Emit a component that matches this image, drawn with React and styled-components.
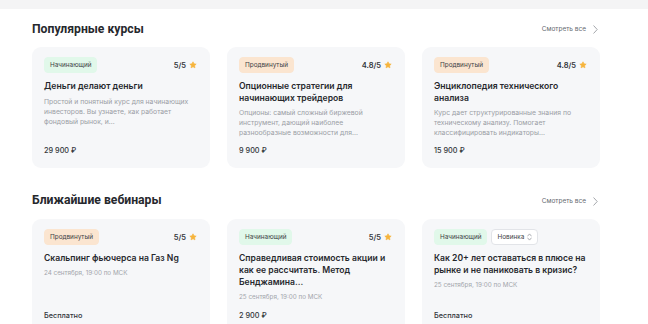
import React from "react";
import styled, { createGlobalStyle } from "styled-components";

const GlobalStyle = createGlobalStyle`
  html, body { margin: 0; padding: 0; background: #ffffff; }
  body { font-family: Inter, "Noto Sans", sans-serif; color: #2b2d33; }
  * { box-sizing: border-box; }
`;

const TopBar = styled.div`
  height: 9px;
  background: #f4f4f5;
`;

const Main = styled.main`
  padding: 12px 48px 0 32px;
  display: flex;
  flex-direction: column;
  gap: 24px;
`;

const Section = styled.section`
  display: flex;
  flex-direction: column;
  gap: ${(p) => p.$gap || 10}px;
`;

const SectionHeader = styled.div`
  display: flex;
  align-items: center;
  justify-content: space-between;
  height: 16px;
`;

const SectionTitle = styled.h2`
  margin: 0;
  font-family: Roboto, "Liberation Sans", sans-serif;
  font-weight: 700;
  font-size: 12.2px;
  line-height: 16px;
  color: #26282d;
`;

const SeeAll = styled.a`
  display: flex;
  align-items: center;
  gap: 7px;
  font-family: Inter, sans-serif;
  font-size: 6.5px;
  color: #666a70;
  text-decoration: none;
  margin-right: 2px;
  margin-top: ${(p) => p.$shift || 0}px;
`;

const Grid = styled.div`
  display: grid;
  grid-template-columns: repeat(3, 1fr);
  gap: 17px;
`;

const Card = styled.article`
  background: #f6f7f9;
  border-radius: 9px;
  padding: 10px 12px 12px;
  display: flex;
  flex-direction: column;
  min-height: ${(p) => p.$minH || 0}px;
`;

const CardTop = styled.div`
  display: flex;
  align-items: center;
  justify-content: space-between;
  height: 16px;
`;

const Badges = styled.div`
  display: flex;
  gap: 4px;
`;

const badgeColors = {
  green: { bg: "#e1f8ea", border: "#e1f8ea" },
  orange: { bg: "#fbe5d0", border: "#fbe5d0" },
  outline: { bg: "#ffffff", border: "#e2e4e8" },
};

const Badge = styled.span`
  display: inline-flex;
  align-items: center;
  gap: 3px;
  height: 16px;
  padding: 0 5px;
  border-radius: 4px;
  font-size: 6.4px;
  color: #3c3f45;
  background: ${(p) => badgeColors[p.$tone].bg};
  border: 0.7px solid ${(p) => badgeColors[p.$tone].border};
`;

const Rating = styled.div`
  display: flex;
  align-items: center;
  gap: 3px;
  font-size: 7.5px;
  font-weight: 600;
  color: #33363b;
  margin-right: 1px;
`;

const CardTitle = styled.h3`
  margin: 8px 0 0;
  font-size: 8.6px;
  font-weight: 600;
  line-height: 11.7px;
  color: #26282d;
`;

const Desc = styled.p`
  margin: 4px 0 0;
  font-size: 6.8px;
  line-height: 10px;
  color: #9b9ea5;
`;

const DateText = styled.p`
  margin: 3px 0 0;
  font-size: 6.3px;
  line-height: 10px;
  color: #a2a5ab;
`;

const Price = styled.div`
  margin-top: auto;
  padding-top: 8px;
  font-size: 7.3px;
  font-weight: 500;
  line-height: 10px;
  color: #33363b;
`;

const StarIcon = () => (
  <svg width="8" height="8" viewBox="0 0 24 24" aria-hidden="true">
    <path
      d="M12 2.5l2.9 6.1 6.6.8-4.9 4.6 1.3 6.6L12 17.3l-5.9 3.3 1.3-6.6L2.5 9.4l6.6-.8z"
      fill="#f6b43c"
      stroke="#f6b43c"
      strokeWidth="2"
      strokeLinejoin="round"
    />
  </svg>
);

const Chevron = () => (
  <svg width="5" height="9" viewBox="0 0 5 9" aria-hidden="true">
    <path d="M0.8 0.8L4.2 4.5L0.8 8.2" fill="none" stroke="#9a9da3" strokeWidth="0.9" strokeLinecap="round" strokeLinejoin="round" />
  </svg>
);

const UpDown = () => (
  <svg width="5" height="8" viewBox="0 0 5 8" aria-hidden="true">
    <path d="M0.7 3L2.5 0.9L4.3 3M0.7 5L2.5 7.1L4.3 5" fill="none" stroke="#8a8d93" strokeWidth="0.7" strokeLinecap="round" strokeLinejoin="round" />
  </svg>
);

const courses = [
  {
    level: "Начинающий",
    tone: "green",
    rating: "5/5",
    title: "Деньги делают деньги",
    desc: "Простой и понятный курс для начинающих инвесторов. Вы узнаете, как работает фондовый рынок, и...",
    price: "29 900 ₽",
  },
  {
    level: "Продвинутый",
    tone: "orange",
    rating: "4.8/5",
    title: "Опционные стратегии для начинающих трейдеров",
    desc: "Опционы: самый сложный биржевой инструмент, дающий наиболее разнообразные возможности для...",
    price: "9 900 ₽",
  },
  {
    level: "Продвинутый",
    tone: "orange",
    rating: "4.8/5",
    title: "Энциклопедия технического анализа",
    desc: "Курс дает структурированные знания по техническому анализу. Помогает классифицировать индикаторы...",
    price: "15 900 ₽",
  },
];

const webinars = [
  {
    level: "Продвинутый",
    tone: "orange",
    rating: "5/5",
    title: "Скальпинг фьючерса на Газ Ng",
    date: "24 сентября, 19:00 по МСК",
    price: "Бесплатно",
  },
  {
    level: "Начинающий",
    tone: "green",
    rating: "5/5",
    title: "Справедливая стоимость акции и как ее рассчитать. Метод Бенджамина...",
    date: "25 сентября, 19:00 по МСК",
    price: "2 900 ₽",
  },
  {
    level: "Начинающий",
    tone: "green",
    isNew: true,
    title: "Как 20+ лет оставаться в плюсе на рынке и не паниковать в кризис?",
    date: "25 сентября, 19:00 по МСК",
    price: "Бесплатно",
  },
];

const CardHead = ({ item }) => (
  <CardTop>
    <Badges>
      <Badge $tone={item.tone}>{item.level}</Badge>
      {item.isNew && (
        <Badge $tone="outline">
          Новинка <UpDown />
        </Badge>
      )}
    </Badges>
    {item.rating && (
      <Rating>
        {item.rating}
        <StarIcon />
      </Rating>
    )}
  </CardTop>
);

export default function App() {
  return (
    <>
      <GlobalStyle />
      <TopBar />
      <Main>
        <Section $gap={10}>
          <SectionHeader>
            <SectionTitle>Популярные курсы</SectionTitle>
            <SeeAll href="#">
              Смотреть все <Chevron />
            </SeeAll>
          </SectionHeader>
          <Grid>
            {courses.map((c) => (
              <Card key={c.title}>
                <CardHead item={c} />
                <CardTitle>{c.title}</CardTitle>
                <Desc>{c.desc}</Desc>
                <Price>{c.price}</Price>
              </Card>
            ))}
          </Grid>
        </Section>
        <Section $gap={11}>
          <SectionHeader>
            <SectionTitle>Ближайшие вебинары</SectionTitle>
            <SeeAll href="#" $shift={2}>
              Смотреть все <Chevron />
            </SeeAll>
          </SectionHeader>
          <Grid>
            {webinars.map((w) => (
              <Card key={w.title} $minH={114}>
                <CardHead item={w} />
                <CardTitle>{w.title}</CardTitle>
                <DateText>{w.date}</DateText>
                <Price>{w.price}</Price>
              </Card>
            ))}
          </Grid>
        </Section>
      </Main>
    </>
  );
}
